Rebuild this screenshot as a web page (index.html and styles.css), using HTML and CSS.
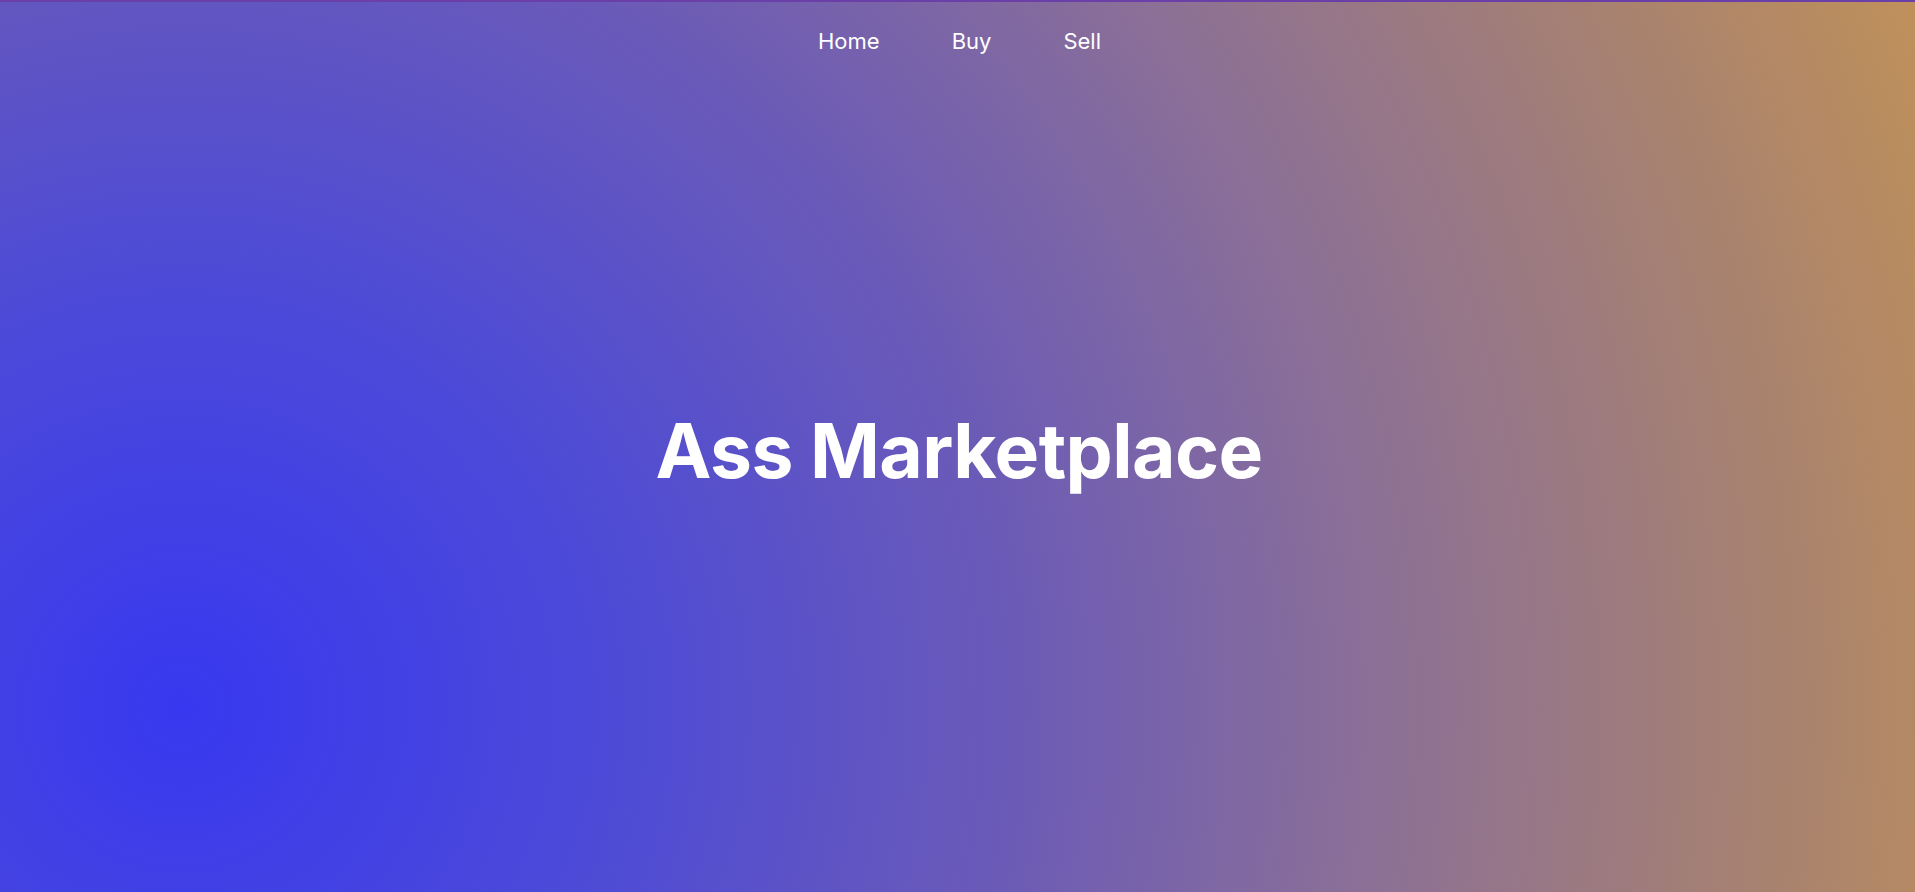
FILE: index.html
```html
<!DOCTYPE html>
<html lang="en">
<head>
<meta charset="utf-8">
<title>Ass Marketplace</title>
<link rel="stylesheet" href="styles.css">
</head>
<body>
<div class="page">
  <nav class="nav">
    <a class="nav-link" href="#">Home</a>
    <a class="nav-link" href="#">Buy</a>
    <a class="nav-link" href="#">Sell</a>
  </nav>
  <main class="hero">
    <h1 class="title">Ass Marketplace</h1>
  </main>
</div>
</body>
</html>
```
FILE: styles.css
```css
html, body {
  margin: 0;
  padding: 0;
  height: 100%;
}
body {
  font-family: Inter, "Noto Sans", sans-serif;
  color: #fff;
  overflow: hidden;
}
.page {
  height: 100vh;
  box-sizing: border-box;
  border-top: 2px solid #6a40a8;
  background: radial-gradient(circle at 181px 706px, #3838f0 0px, #4c4ad8 420px, #6a5ab8 820px, #8c7096 1200px, #a8826f 1600px, #c29258 1900px);
  display: flex;
  flex-direction: column;
}
.nav {
  display: flex;
  justify-content: center;
  gap: 72px;
  padding-top: 24px;
  padding-left: 4px;
}
.nav-link {
  color: #fff;
  text-decoration: none;
  font-size: 22px;
  line-height: 30px;
}
.hero {
  flex: 1;
  display: flex;
  justify-content: center;
  align-items: flex-start;
}
.title {
  margin: 0;
  margin-top: 350px;
  font-size: 75px;
  font-weight: 700;
  line-height: 1.2;
  letter-spacing: -0.6px;
  padding-left: 3px;
}
```
